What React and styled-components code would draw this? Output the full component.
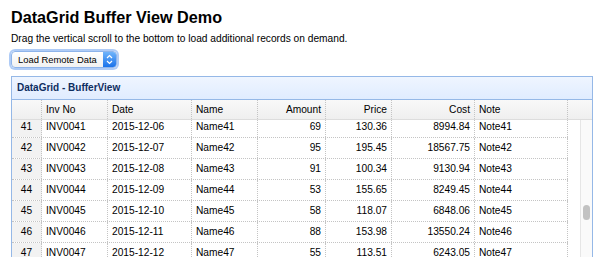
import styled, { createGlobalStyle } from "styled-components"

const Global = createGlobalStyle`
  body {
    margin: 0;
    background: #fff;
    font-family: "Liberation Sans", Arial, Helvetica, sans-serif;
    color: #000;
  }
`

const Page = styled.div`
  padding: 0 7px 0 11px;
`

const Title = styled.h2`
  margin: 0;
  padding-top: 8px;
  font-size: 16.2px;
  line-height: 19px;
  font-weight: bold;
`

const Intro = styled.p`
  margin: 0;
  padding-top: 5px;
  font-size: 10.2px;
  line-height: 14px;
`

const SelectWrap = styled.div`
  margin-top: 5px;
  width: 104px;
  height: 15px;
  display: flex;
  border-radius: 4px;
  border: 1px solid #8eb4ea;
  box-shadow: 0 0 0 2px rgba(108, 160, 238, 0.55);
  background: linear-gradient(#ffffff, #f1f1f1);
  overflow: hidden;
`

const SelectLabel = styled.span`
  flex: 1;
  font-size: 9.4px;
  line-height: 15px;
  padding-left: 6px;
  white-space: nowrap;
`

const SelectArrow = styled.span`
  width: 13px;
  display: flex;
  align-items: center;
  justify-content: center;
  background: linear-gradient(#6fb4fb, #1a72ea);
`

const Panel = styled.div`
  margin-top: 8px;
  border: 1px solid #95b8e7;
`

const PanelHeader = styled.div`
  height: 22px;
  padding-left: 5px;
  font-size: 10px;
  font-weight: bold;
  line-height: 22px;
  color: #0e2d5f;
  background: linear-gradient(#eff5ff, #e0ecff);
  border-bottom: 1px solid #95b8e7;
`

const COLS = "30px 66px 84px 66px 68px 66px 83px 93px"

const HeadRow = styled.div`
  display: grid;
  grid-template-columns: ${COLS} 1fr;
  height: 19px;
  background: linear-gradient(#f9f9f9, #efefef);
  border-bottom: 1px solid #dddddd;
`

const Cell = styled.div`
  border-right: 1px dotted #c4c4c4;
  padding: 0 4px;
  font-size: 10.2px;
  line-height: ${({ $h }) => $h}px;
  text-align: ${({ $align }) => $align || "left"};
  white-space: nowrap;
  overflow: hidden;
  background: ${({ $num }) => ($num ? "#f2f2f2" : "transparent")};
  &:last-child {
    border-right: ${({ $filler }) => ($filler ? "none" : "1px dotted #c4c4c4")};
  }
`

const Body = styled.div`
  display: flex;
  height: 160px;
  overflow: hidden;
`

const Rows = styled.div`
  margin-top: -3px;
`

const Row = styled.div`
  display: grid;
  grid-template-columns: ${COLS};
  height: 20px;
  border-bottom: 1px dotted #c4c4c4;
`

const Blank = styled.div`
  flex: 1;
`

const Track = styled.div`
  width: 11px;
  border-left: 1px solid #e6e6e6;
  background: #fafafa;
  display: flex;
  justify-content: center;
  padding-top: 85px;
`

const Thumb = styled.div`
  width: 7px;
  height: 15px;
  border-radius: 4px;
  background: #c2c2c2;
`

const columns = [
  { key: "num", title: "", align: "center" },
  { key: "inv", title: "Inv No" },
  { key: "date", title: "Date" },
  { key: "name", title: "Name" },
  { key: "amount", title: "Amount", align: "right" },
  { key: "price", title: "Price", align: "right" },
  { key: "cost", title: "Cost", align: "right" },
  { key: "note", title: "Note" },
]

const data = [
  [41, "2015-12-06", 69, "130.36", "8994.84"],
  [42, "2015-12-07", 95, "195.45", "18567.75"],
  [43, "2015-12-08", 91, "100.34", "9130.94"],
  [44, "2015-12-09", 53, "155.65", "8249.45"],
  [45, "2015-12-10", 58, "118.07", "6848.06"],
  [46, "2015-12-11", 88, "153.98", "13550.24"],
  [47, "2015-12-12", 55, "113.51", "6243.05"],
].map(([n, date, amount, price, cost]) => ({
  num: n,
  inv: "INV00" + n,
  date,
  name: "Name" + n,
  amount,
  price,
  cost,
  note: "Note" + n,
}))

function Arrows() {
  return (
    <svg width="7" height="11" viewBox="0 0 7 11">
      <path d="M1 4 L3.5 1.5 L6 4 M1 7 L3.5 9.5 L6 7" fill="none" stroke="#fff" strokeWidth="1.2" />
    </svg>
  )
}

export default function App() {
  return (
    <Page>
      <Global />
      <Title>DataGrid Buffer View Demo</Title>
      <Intro>Drag the vertical scroll to the bottom to load additional records on demand.</Intro>
      <SelectWrap>
        <SelectLabel>Load Remote Data</SelectLabel>
        <SelectArrow>
          <Arrows />
        </SelectArrow>
      </SelectWrap>
      <Panel>
        <PanelHeader>DataGrid - BufferView</PanelHeader>
        <HeadRow>
          {columns.map((c) => (
            <Cell key={c.key} $h={19} $align={c.align}>
              {c.title}
            </Cell>
          ))}
          <Cell $h={19} $filler />
        </HeadRow>
        <Body>
          <Rows>
            {data.map((r) => (
              <Row key={r.num}>
                {columns.map((c) => (
                  <Cell key={c.key} $h={20} $align={c.align} $num={c.key === "num"}>
                    {r[c.key]}
                  </Cell>
                ))}
              </Row>
            ))}
          </Rows>
          <Blank />
          <Track>
            <Thumb />
          </Track>
        </Body>
      </Panel>
    </Page>
  )
}
